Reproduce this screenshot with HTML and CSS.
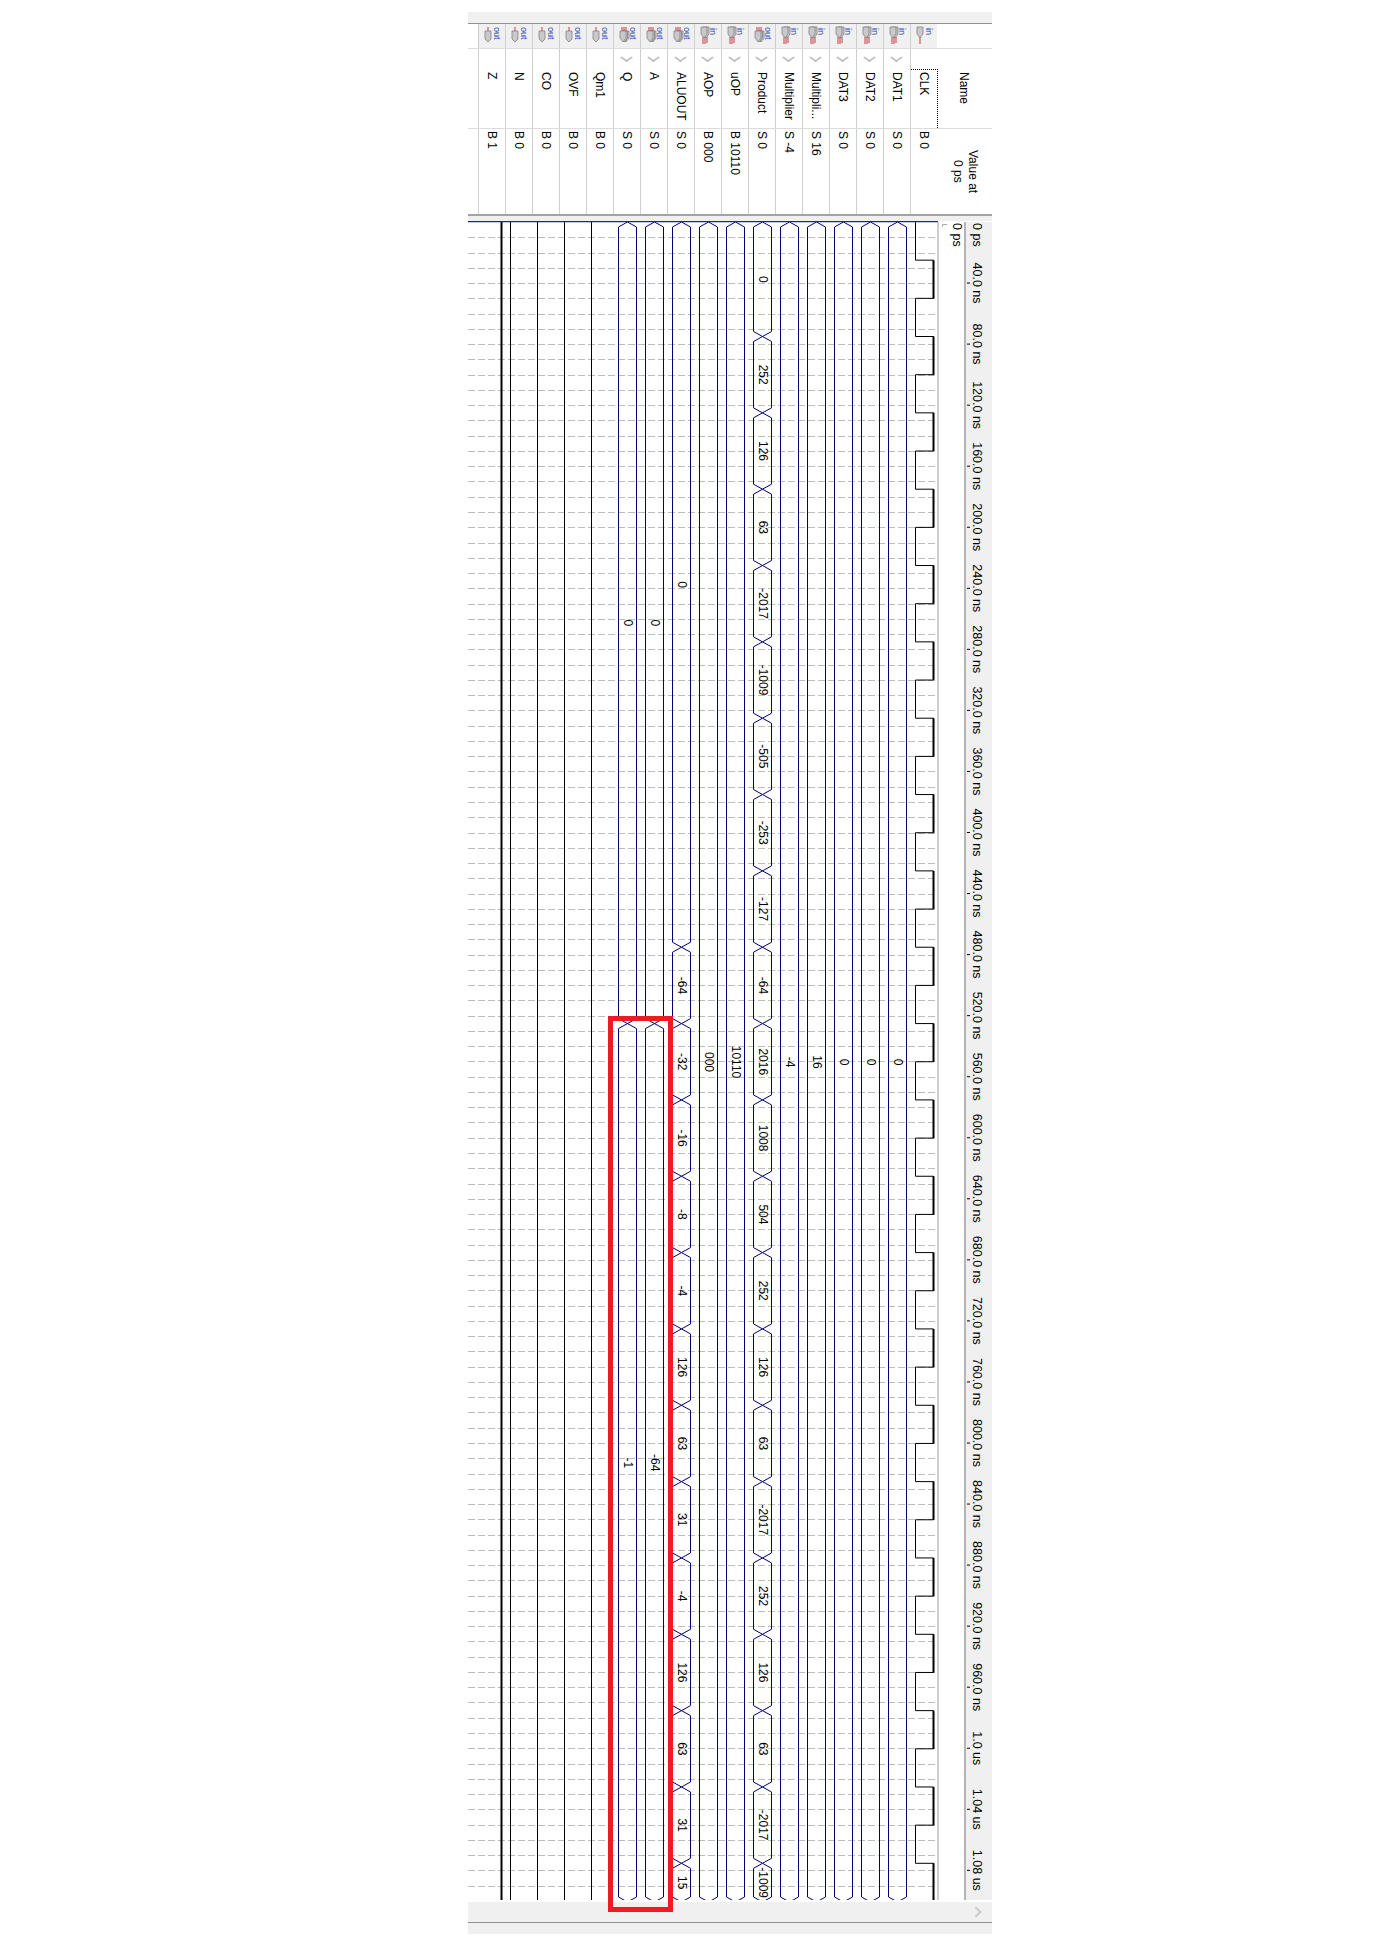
FILE: index.html
```html
<!DOCTYPE html>
<html>
<head>
    <title>Waveform</title>
    <link rel="stylesheet" href="styles.css">
</head>
<body>

    <!-- pin shapes used in the first header row -->
    <svg class="defs" width="0" height="0">
        <symbol id="pin-out" viewBox="0 0 27 24">
            <path class="pin-wire" d="M9 3V7"/>
            <path class="pin-body" d="M6 7H12V15L9 18L6 15Z"/>
        </symbol>
        <symbol id="pin-bus-out" viewBox="0 0 27 24">
            <path class="pin-wire" d="M8 3V7M10 3V7M12 3V7"/>
            <path class="pin-body" d="M9 7H15V14L12 18L9 14Z"/>
            <path class="pin-body" d="M7.500 7H13.500V14L10.500 18L7.500 14Z"/>
            <path class="pin-body" d="M6 7H12V14L9 18L6 14Z"/>
        </symbol>
        <symbol id="pin-bus-in" viewBox="0 0 27 24">
            <path class="pin-wire" d="M8 13V20M10 13V20M12 13V19"/>
            <path class="pin-body" d="M8 3H14V10L11 14L8 10Z"/>
            <path class="pin-body" d="M6 3H12V10L9 14L6 10Z"/>
        </symbol>
        <symbol id="pin-in" viewBox="0 0 27 24">
            <path class="pin-wire" d="M9 13V20"/>
            <path class="pin-body" d="M6 3H12V10L9 14L6 10Z"/>
        </symbol>
    </svg>

    <div class="window">
        <div class="top-bar"></div>

        <!-- pin type icons -->
        <div class="row icons">
            <div class="cell"><svg class="pin" viewBox="0 0 26 24"><use href="#pin-out" width="27" height="24"/><text class="pin-text" transform="translate(14.500 3) rotate(90)">out</text></svg></div>
            <div class="cell"><svg class="pin" viewBox="0 0 26 24"><use href="#pin-out" width="27" height="24"/><text class="pin-text" transform="translate(14.500 3) rotate(90)">out</text></svg></div>
            <div class="cell"><svg class="pin" viewBox="0 0 26 24"><use href="#pin-out" width="27" height="24"/><text class="pin-text" transform="translate(14.500 3) rotate(90)">out</text></svg></div>
            <div class="cell"><svg class="pin" viewBox="0 0 26 24"><use href="#pin-out" width="27" height="24"/><text class="pin-text" transform="translate(14.500 3) rotate(90)">out</text></svg></div>
            <div class="cell"><svg class="pin" viewBox="0 0 26 24"><use href="#pin-out" width="27" height="24"/><text class="pin-text" transform="translate(14.500 3) rotate(90)">out</text></svg></div>
            <div class="cell"><svg class="pin" viewBox="0 0 26 24"><use href="#pin-bus-out" width="27" height="24"/><text class="pin-text" transform="translate(15.500 3) rotate(90)">out</text></svg></div>
            <div class="cell"><svg class="pin" viewBox="0 0 26 24"><use href="#pin-bus-out" width="27" height="24"/><text class="pin-text" transform="translate(15.500 3) rotate(90)">out</text></svg></div>
            <div class="cell"><svg class="pin" viewBox="0 0 26 24"><use href="#pin-bus-out" width="27" height="24"/><text class="pin-text" transform="translate(15.500 3) rotate(90)">out</text></svg></div>
            <div class="cell"><svg class="pin" viewBox="0 0 26 24"><use href="#pin-bus-in" width="27" height="24"/><text class="pin-text" transform="translate(15 4) rotate(90)">in</text></svg></div>
            <div class="cell"><svg class="pin" viewBox="0 0 26 24"><use href="#pin-bus-in" width="27" height="24"/><text class="pin-text" transform="translate(15 4) rotate(90)">in</text></svg></div>
            <div class="cell"><svg class="pin" viewBox="0 0 26 24"><use href="#pin-bus-out" width="27" height="24"/><text class="pin-text" transform="translate(15.500 3) rotate(90)">out</text></svg></div>
            <div class="cell"><svg class="pin" viewBox="0 0 26 24"><use href="#pin-bus-in" width="27" height="24"/><text class="pin-text" transform="translate(15 4) rotate(90)">in</text></svg></div>
            <div class="cell"><svg class="pin" viewBox="0 0 26 24"><use href="#pin-bus-in" width="27" height="24"/><text class="pin-text" transform="translate(15 4) rotate(90)">in</text></svg></div>
            <div class="cell"><svg class="pin" viewBox="0 0 26 24"><use href="#pin-bus-in" width="27" height="24"/><text class="pin-text" transform="translate(15 4) rotate(90)">in</text></svg></div>
            <div class="cell"><svg class="pin" viewBox="0 0 26 24"><use href="#pin-bus-in" width="27" height="24"/><text class="pin-text" transform="translate(15 4) rotate(90)">in</text></svg></div>
            <div class="cell"><svg class="pin" viewBox="0 0 26 24"><use href="#pin-bus-in" width="27" height="24"/><text class="pin-text" transform="translate(15 4) rotate(90)">in</text></svg></div>
            <div class="cell"><svg class="pin" viewBox="0 0 26 24"><use href="#pin-in" width="27" height="24"/><text class="pin-text" transform="translate(15 4) rotate(90)">in</text></svg></div>
        </div>

        <!-- signal names -->
        <div class="row names">
            <div class="cell"><div class="slot"></div><span class="label">Z</span></div>
            <div class="cell"><div class="slot"></div><span class="label">N</span></div>
            <div class="cell"><div class="slot"></div><span class="label">CO</span></div>
            <div class="cell"><div class="slot"></div><span class="label">OVF</span></div>
            <div class="cell"><div class="slot"></div><span class="label">Qm1</span></div>
            <div class="cell"><div class="slot"><i class="chevron"></i></div><span class="label">Q</span></div>
            <div class="cell"><div class="slot"><i class="chevron"></i></div><span class="label">A</span></div>
            <div class="cell"><div class="slot"><i class="chevron"></i></div><span class="label">ALUOUT</span></div>
            <div class="cell"><div class="slot"><i class="chevron"></i></div><span class="label">AOP</span></div>
            <div class="cell"><div class="slot"><i class="chevron"></i></div><span class="label">uOP</span></div>
            <div class="cell"><div class="slot"><i class="chevron"></i></div><span class="label">Product</span></div>
            <div class="cell"><div class="slot"><i class="chevron"></i></div><span class="label">Multiplier</span></div>
            <div class="cell"><div class="slot"><i class="chevron"></i></div><span class="label">Multipli...</span></div>
            <div class="cell"><div class="slot"><i class="chevron"></i></div><span class="label">DAT3</span></div>
            <div class="cell"><div class="slot"><i class="chevron"></i></div><span class="label">DAT2</span></div>
            <div class="cell"><div class="slot"><i class="chevron"></i></div><span class="label">DAT1</span></div>
            <div class="cell focus"><div class="slot"></div><span class="label">CLK</span></div>
            <div class="head name-head"><div class="slot"></div><span class="label">Name</span></div>
        </div>

        <!-- values at cursor -->
        <div class="row values">
            <div class="cell"><span class="label">B 1</span></div>
            <div class="cell"><span class="label">B 0</span></div>
            <div class="cell"><span class="label">B 0</span></div>
            <div class="cell"><span class="label">B 0</span></div>
            <div class="cell"><span class="label">B 0</span></div>
            <div class="cell"><span class="label">S 0</span></div>
            <div class="cell"><span class="label">S 0</span></div>
            <div class="cell"><span class="label">S 0</span></div>
            <div class="cell"><span class="label">B 000</span></div>
            <div class="cell"><span class="label">B 10110</span></div>
            <div class="cell"><span class="label">S 0</span></div>
            <div class="cell"><span class="label">S -4</span></div>
            <div class="cell"><span class="label">S 16</span></div>
            <div class="cell"><span class="label">S 0</span></div>
            <div class="cell"><span class="label">S 0</span></div>
            <div class="cell"><span class="label">S 0</span></div>
            <div class="cell"><span class="label">B 0</span></div>
            <div class="head value-head"><span class="label">Value at<br>0 ps</span></div>
        </div>

        <div class="strip"></div>

        <!-- filled in by script.js, viewBox uses page coordinates -->
        <svg id="waves" class="waves" viewBox="468 221 524 1680"></svg>

        <div class="scroll-bar"><i class="scroll-arrow"></i></div>
        <div class="status-bar"></div>

        <!-- red highlight box over Q and A -->
        <div class="highlight"></div>
    </div>

    <script src="script.js"></script>
</body>
</html>
```

FILE: styles.css
```css
body { margin: 0; background: white; font-family: "Liberation Sans", Arial, sans-serif; font-size: 12px; color: black; }

.defs { position: absolute; }
.pin-wire { fill: none; stroke: #c8383c; stroke-width: 1; }
.pin-body { fill: #c9c9cb; stroke: #77777d; stroke-width: 0.7; }
.pin-text { font-family: "Liberation Sans", Arial, sans-serif; font-size: 9px; fill: #2c48b4; }

.window { position: relative; width: 524px; height: 1922px; margin: 12px 0 0 468px; }
.top-bar { height: 11px; background: #f0f0f0; border-bottom: 1px solid #8f8f8f; }

/* header rows */
.row { display: flex; padding-left: 10px; box-sizing: border-box; }
.cell { position: relative; flex: 0 0 27px; box-sizing: border-box; border-left: 1px solid #cfcfcf; display: flex; flex-direction: column; align-items: center; }
.label { writing-mode: vertical-rl; line-height: 15px; white-space: nowrap; }
.head { flex: 1; display: flex; flex-direction: column; align-items: center; }
.name-head { padding-right: 3px; }

.icons { height: 24px; }
.icons .cell { background: #f0f0f0; }
.pin { width: 26px; height: 24px; }

.names { height: 80px; border-top: 1px solid #dcdcdc; }
.names .cell, .values .cell { padding-right: 1px; }
.slot { height: 23px; width: 100%; display: flex; justify-content: center; padding-top: 7px; box-sizing: border-box; flex: none; }
.chevron { display: block; width: 7px; height: 7px; margin-top: -3px; border-right: 2px solid #bdbdbd; border-bottom: 2px solid #bdbdbd; transform: scaleY(0.7) rotate(45deg); }
.focus::after { content: ""; position: absolute; left: 0; top: 20px; right: -1px; bottom: 0; border-top: 1px dotted black; border-right: 1px dotted black; }

.values { height: 86px; border-top: 1px solid #dcdcdc; }
.values .cell { padding-top: 2px; }
.value-head { justify-content: center; }
.value-head .label { text-align: center; }

.strip { height: 7px; box-sizing: border-box; background: #f0f0f0; border-top: 2px solid #a3a3a3; }

/* waveform */
.waves { display: block; width: 524px; height: 1680px; }
.grid { stroke: #bdbdbd; stroke-width: 1; stroke-dasharray: 7 3; }
.cursor { stroke: #1c1ccc; stroke-width: 1.500; }
.bit { fill: none; stroke: black; stroke-width: 1; }
.bit-high { fill: none; stroke: black; stroke-width: 2; }
.bus { fill: none; stroke: #000070; stroke-width: 1; }
.bus-text { font-size: 12px; fill: black; }
.divider { stroke: #bdbdbd; stroke-width: 1.500; }
.ruler { fill: #f0f0f0; }
.ruler-edge { stroke: #b4b4b4; stroke-width: 2; }
.ruler-text { font-size: 12.500px; fill: black; }
.tick { stroke: black; stroke-width: 1; }
.marker { fill: none; stroke: #aaaaaa; stroke-width: 1; }

.scroll-bar { height: 20px; margin-top: 1px; background: #f0f0f0; border-bottom: 1px solid #8f8f8f; position: relative; }
.scroll-arrow { position: absolute; right: 12px; top: 6px; width: 6px; height: 6px; border-top: 2px solid #cccccc; border-right: 2px solid #cccccc; transform: rotate(45deg); }
.status-bar { height: 11px; background: #f0f0f0; }

.highlight { position: absolute; left: 140px; top: 1004px; width: 65px; height: 896px; box-sizing: border-box; border: 5px solid #ed1c24; }
```

FILE: script.js
```js
// timing of the waveform, in page pixels
const TOP = 222;
const BOTTOM = 1900;
const EDGE = 38.17;      // half clock period
const TICK = 61.05;      // 40 ns on the ruler
const LEFT = 468;
const DIVIDER = 938;

// n = clock edge number where the bus value changes
const SIGNALS = [
    { level: 1 },
    { level: 0 },
    { level: 0 },
    { level: 0 },
    { level: 0 },
    { bus: [[0, '0'], [21, '-1']] },
    { bus: [[0, '0'], [21, '-64']] },
    { bus: [[0, '0'], [19, '-64'], [21, '-32'], [23, '-16'], [25, '-8'], [27, '-4'], [29, '126'], [31, '63'], [33, '31'], [35, '-4'], [37, '126'], [39, '63'], [41, '31'], [43, '15']] },
    { bus: [[0, '000']] },
    { bus: [[0, '10110']] },
    { bus: [[0, '0'], [3, '252'], [5, '126'], [7, '63'], [9, '-2017'], [11, '-1009'], [13, '-505'], [15, '-253'], [17, '-127'], [19, '-64'], [21, '2016'], [23, '1008'], [25, '504'], [27, '252'], [29, '126'], [31, '63'], [33, '-2017'], [35, '252'], [37, '126'], [39, '63'], [41, '-2017'], [43, '-1009']] },
    { bus: [[0, '-4']] },
    { bus: [[0, '16']] },
    { bus: [[0, '0']] },
    { bus: [[0, '0']] },
    { bus: [[0, '0']] },
    { clock: true }
];

function rotatedText(cls, x, y, text, anchor) {
    return `<text class="${cls}" transform="translate(${x} ${y}) rotate(90)" text-anchor="${anchor || 'middle'}" dy=".35em">${text}</text>`;
}

function edgeY(n) {
    return TOP + EDGE * n;
}

function drawBus(center, values) {
    let out = '';
    values.forEach((value, i) => {
        const y1 = edgeY(value[0]);
        const y2 = i + 1 < values.length ? edgeY(values[i + 1][0]) : BOTTOM + 2;
        const l = center - 9;
        const r = center + 9;
        out += `<path class="bus" d="M${center} ${y1}L${l} ${y1 + 5}V${y2 - 5}L${center} ${y2}L${r} ${y2 - 5}V${y1 + 5}Z"/>`;
        out += rotatedText('bus-text', center + 0.5, (y1 + y2) / 2, value[1]);
    });
    return out;
}

function drawClock(center) {
    const low = center - 9;
    const high = center + 9;
    let d = `M${low} ${TOP}`;
    let thick = '';
    for (let n = 1; edgeY(n) < BOTTOM; n++) {
        const y = edgeY(n);
        d += `V${y}H${n % 2 ? high : low}`;
        if (n % 2) {
            const end = Math.min(edgeY(n + 1), BOTTOM);
            thick += `M${high} ${y}V${end}`;
        }
    }
    d += `V${BOTTOM}`;
    return `<path class="bit" d="${d}"/><path class="bit-high" d="${thick}"/>`;
}

function rulerLabel(k) {
    if (k === 0) return '0 ps';
    if (k === 25) return '1.0 us';
    if (k === 26) return '1.04 us';
    if (k === 27) return '1.08 us';
    return (k * 40) + '.0 ns';
}

function drawWaves() {
    let out = '';

    // dashed grid, four lines per ruler tick
    for (let i = 1; TOP + i * TICK / 4 < BOTTOM; i++) {
        const y = Math.round(TOP + i * TICK / 4) + 0.5;
        out += `<line class="grid" x1="${LEFT}" x2="${DIVIDER}" y1="${y}" y2="${y}"/>`;
    }

    out += '<clipPath id="wave-clip"><rect x="468" y="221" width="470" height="1679"/></clipPath><g clip-path="url(#wave-clip)">';
    SIGNALS.forEach((signal, i) => {
        const center = 492.5 + 27 * i;
        if (signal.clock) {
            out += drawClock(center);
        } else if (signal.bus) {
            out += drawBus(center, signal.bus);
        } else if (signal.level) {
            out += `<path class="bit-high" d="M${center + 9} ${TOP}V${BOTTOM}"/>`;
        } else {
            out += `<path class="bit" d="M${center - 9} ${TOP}V${BOTTOM}"/>`;
        }
    });
    out += '</g>';

    out += `<line class="cursor" x1="${LEFT}" x2="${DIVIDER}" y1="221.500" y2="221.500"/>`;
    out += `<line class="divider" x1="${DIVIDER}" x2="${DIVIDER}" y1="222" y2="${BOTTOM}"/>`;

    // cursor label
    out += '<path class="marker" d="M947 224.500H942.500V227"/>';
    out += rotatedText('ruler-text', 957, 223, '0 ps', 'start');

    // time ruler
    out += `<rect class="ruler" x="964" y="222" width="28" height="${BOTTOM - 222}"/>`;
    out += `<line class="ruler-edge" x1="965" x2="965" y1="222" y2="${BOTTOM}"/>`;
    for (let k = 0; k < 28; k++) {
        const y = TOP + k * TICK;
        if (k === 0) {
            out += rotatedText('ruler-text', 977, y + 1, rulerLabel(k), 'start');
        } else {
            out += `<line class="tick" x1="967" x2="970" y1="${y}" y2="${y}"/>`;
            out += rotatedText('ruler-text', 977, y, rulerLabel(k));
        }
    }

    document.getElementById('waves').innerHTML = out;
}

drawWaves();
```
